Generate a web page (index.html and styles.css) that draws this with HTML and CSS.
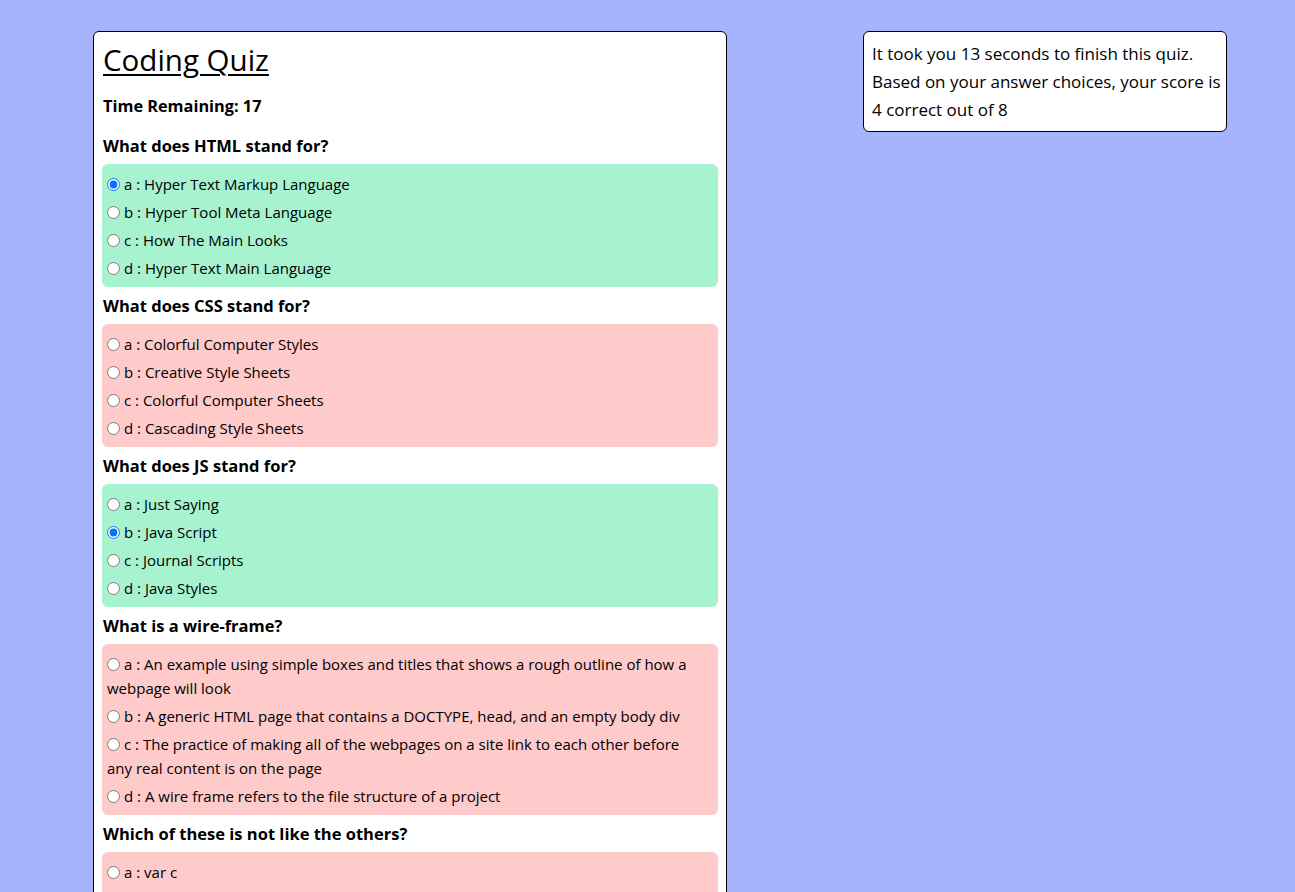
FILE: index.html
```html
<!DOCTYPE html>
<html lang="en">
<head>
<meta charset="utf-8">
<title>Coding Quiz</title>
<link rel="stylesheet" href="styles.css">
</head>
<body>
<div class="page">
  <main class="quiz-card">
    <h1 class="title">Coding Quiz</h1>
    <p class="timer">Time Remaining: 17</p>

    <section class="question">
      <h2 class="q-title">What does HTML stand for?</h2>
      <div class="answers correct">
        <label class="option"><input type="radio" name="q1" checked>a : Hyper Text Markup Language</label>
        <label class="option"><input type="radio" name="q1">b : Hyper Tool Meta Language</label>
        <label class="option"><input type="radio" name="q1">c : How The Main Looks</label>
        <label class="option"><input type="radio" name="q1">d : Hyper Text Main Language</label>
      </div>
    </section>

    <section class="question">
      <h2 class="q-title">What does CSS stand for?</h2>
      <div class="answers wrong">
        <label class="option"><input type="radio" name="q2">a : Colorful Computer Styles</label>
        <label class="option"><input type="radio" name="q2">b : Creative Style Sheets</label>
        <label class="option"><input type="radio" name="q2">c : Colorful Computer Sheets</label>
        <label class="option"><input type="radio" name="q2">d : Cascading Style Sheets</label>
      </div>
    </section>

    <section class="question">
      <h2 class="q-title">What does JS stand for?</h2>
      <div class="answers correct">
        <label class="option"><input type="radio" name="q3">a : Just Saying</label>
        <label class="option"><input type="radio" name="q3" checked>b : Java Script</label>
        <label class="option"><input type="radio" name="q3">c : Journal Scripts</label>
        <label class="option"><input type="radio" name="q3">d : Java Styles</label>
      </div>
    </section>

    <section class="question">
      <h2 class="q-title">What is a wire-frame?</h2>
      <div class="answers wrong">
        <label class="option"><input type="radio" name="q4">a : An example using simple boxes and titles that shows a rough outline of how a webpage will look</label>
        <label class="option"><input type="radio" name="q4">b : A generic HTML page that contains a DOCTYPE, head, and an empty body div</label>
        <label class="option"><input type="radio" name="q4">c : The practice of making all of the webpages on a site link to each other before any real content is on the page</label>
        <label class="option"><input type="radio" name="q4">d : A wire frame refers to the file structure of a project</label>
      </div>
    </section>

    <section class="question">
      <h2 class="q-title">Which of these is not like the others?</h2>
      <div class="answers wrong">
        <label class="option"><input type="radio" name="q5">a : var c</label>
        <label class="option"><input type="radio" name="q5">b : let c</label>
        <label class="option"><input type="radio" name="q5">c : const c</label>
        <label class="option"><input type="radio" name="q5">d : function c</label>
      </div>
    </section>
  </main>

  <aside class="result-card">
    <p class="result-text">It took you 13 seconds to finish this quiz.<br>Based on your answer choices, your score is<br>4 correct out of 8</p>
  </aside>
</div>
</body>
</html>
```

FILE: styles.css
```css
html, body {
  margin: 0;
  padding: 0;
}

body {
  background: #a5b4fc;
  font-family: "Open Sans", "Noto Sans", sans-serif;
  color: #000;
}

.page {
  display: flex;
  align-items: flex-start;
  gap: 136px;
  padding: 31px 0 0 93px;
}

.quiz-card {
  width: 634px;
  box-sizing: border-box;
  background: #fff;
  border: 1px solid #000;
  border-radius: 6px;
  padding: 4px 8px 8px 9px;
}

.title {
  margin: 0;
  font-size: 29.5px;
  font-weight: 400;
  line-height: 48px;
  text-decoration: underline;
  text-decoration-thickness: 2px;
  text-underline-offset: 3px;
}

.timer {
  margin: 8px 0 12px;
  font-size: 16.3px;
  font-weight: 700;
  line-height: 28px;
}

.question {
  margin-top: 5px;
}

.q-title {
  margin: 0 0 4px;
  font-size: 16.5px;
  font-weight: 700;
  line-height: 28px;
}

.answers {
  display: flex;
  flex-direction: column;
  gap: 4px;
  margin-left: -1px;
  padding: 8px 20px 7px 5px;
  border-radius: 6px;
  font-size: 15px;
  line-height: 24px;
}

.answers.correct {
  background: #a7f3d0;
}

.answers.wrong {
  background: #fecaca;
}

.option {
  display: block;
}

.option input {
  width: 13px;
  height: 13px;
  margin: 0 4px 0 0;
  vertical-align: -1px;
}

.result-card {
  width: 364px;
  box-sizing: border-box;
  background: #fff;
  border: 1px solid #000;
  border-radius: 6px;
  padding: 8px 8px 7px;
}

.result-text {
  margin: 0;
  font-size: 17px;
  line-height: 28px;
  white-space: nowrap;
}
```
